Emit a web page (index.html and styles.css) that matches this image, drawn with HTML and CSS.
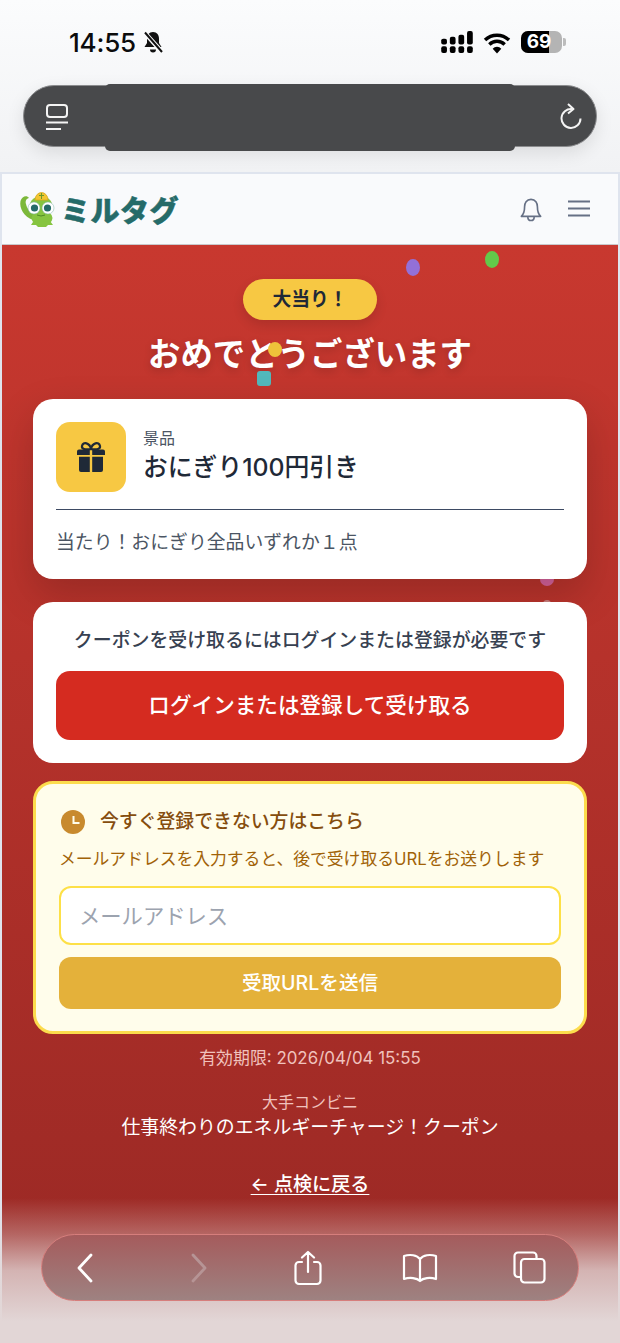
FILE: index.html
```html
<!DOCTYPE html>
<html lang="ja">
<head>
<meta charset="utf-8">
<title>ミルタグ</title>
<link rel="stylesheet" href="styles.css">
</head>
<body>
<div class="phone">
  <div class="chrome-top">
    <div class="status">
      <div class="status-left">
        <span class="clock">14:55</span>
        <svg class="mute" viewBox="0 0 22 24" width="22" height="24"><path d="M11 2c-4 0-6 3-6 7v4l-2.500 4h17L17 13V9c0-4-2-7-6-7z" fill="#111"/><path d="M8 19.500a3 3 0 0 0 6 0z" fill="#111"/><path d="M2 2l18 20" stroke="#fbfcfd" stroke-width="4.500"/><path d="M3 2.500l17 19.500" stroke="#111" stroke-width="2"/></svg>
      </div>
      <div class="status-right">
        <svg width="32" height="22" viewBox="0 0 33 23"><g fill="#000"><rect x="0" y="8" width="6" height="6" rx="2"/><rect x="0" y="16" width="6" height="7" rx="2"/><rect x="9" y="6" width="6" height="8" rx="2"/><rect x="9" y="16" width="6" height="7" rx="2"/><rect x="18" y="4" width="6" height="10" rx="2"/><rect x="18" y="16" width="6" height="7" rx="2"/><rect x="27" y="0" width="6" height="14" rx="2"/><rect x="27" y="16" width="6" height="7" rx="2"/></g></svg>
        <svg width="28" height="23" viewBox="0 0 29 24"><g fill="none" stroke="#000" stroke-width="3.600"><path d="M2 9.500a18 18 0 0 1 25 0"/><path d="M6.500 14a11.500 11.500 0 0 1 16 0"/></g><path d="M10 18.500a6 6 0 0 1 9 0l-4.500 5z" fill="#000"/></svg>
        <div class="battery"><div class="battery-level"></div><span class="battery-num">69</span><span class="battery-cap"></span></div>
      </div>
    </div>
    <div class="urlbar">
      <svg class="url-tabs" width="24" height="26" viewBox="0 0 24 26" fill="none" stroke="#f4f4f4" stroke-width="2"><rect x="2" y="1" width="20" height="12" rx="3"/><path d="M1 18.500h22M1 25h15"/></svg>
      <svg class="url-reload" width="23" height="26" viewBox="0 0 23 26" fill="none" stroke="#f4f4f4" stroke-width="2"><path d="M13 6a9.500 9.500 0 1 0 8.500 9.500"/><path d="M9 1l5.500 5-5.500 4.500" stroke-linejoin="round"/></svg>
      <div class="redaction"></div>
    </div>
  </div>

  <div class="site">
    <header class="site-header">
      <div class="logo">
        <svg width="38" height="38" viewBox="0 0 38 38"><path d="M14 30C5 27 0 18 1.500 11 3 6 8 5 10 8 7.500 8.500 6 11 7 14c1 5 4 8 9 9z" fill="#7cb83a"/><ellipse cx="22" cy="15" rx="11" ry="9" fill="#86c440"/><ellipse cx="23" cy="28" rx="10.500" ry="7.500" fill="#86c440"/><path d="M14 32l-2 3h5l2 2h8l2-2h5l-3-4z" fill="#86c440"/><path d="M16 10a6.500 7.500 0 0 1 13 0z" fill="#f2c531" stroke="#d8a81c" stroke-width=".8"/><path d="M22.500 3v6M20 5.500h5" stroke="#6b9a2a" stroke-width="1"/><circle cx="15" cy="18" r="6" fill="#fff" stroke="#7db2a8" stroke-width=".5"/><circle cx="29" cy="18" r="6" fill="#fff" stroke="#7db2a8" stroke-width=".5"/><circle cx="15.500" cy="18" r="3.600" fill="#256b69"/><circle cx="28.500" cy="18" r="3.600" fill="#256b69"/><path d="M18 25q4 2 8 0" stroke="#4f8a25" fill="none"/></svg>
        <span class="logo-text">ミルタグ</span>
      </div>
      <div class="header-icons">
        <svg width="22" height="27" viewBox="0 0 24 28" fill="none" stroke="#667085" stroke-width="1.800"><path d="M12 3c-5 0-7 4-7 8 0 5-1 8-3.500 10.500h21C20 19 19 16 19 11c0-4-2-8-7-8z" stroke-linejoin="round"/><path d="M8.500 21.500c0 6 7 6 7 0"/></svg>
        <svg width="24" height="20" viewBox="0 0 24 20" fill="none" stroke="#667085" stroke-width="1.800"><path d="M1 2.500h22M1 9.500h22M1 16.500h22"/></svg>
      </div>
    </header>

    <main class="prize">
      <i class="confetti c-purple"></i>
      <i class="confetti c-green"></i>
      <i class="confetti c-pink"></i>
      <i class="confetti c-faint"></i>
      <span class="badge">大当り！</span>
      <h1 class="title">おめでとうございます</h1>
      <i class="confetti c-yellow"></i>
      <i class="confetti c-teal"></i>

      <section class="card prize-card">
        <div class="prize-row">
          <div class="gift">
            <svg width="32" height="32" viewBox="0 0 32 32" fill="#1f2937"><path d="M16 8c-1-6-8-8-9-3-.6 3 3 4 9 3zm0 0c1-6 8-8 9-3 .6 3-3 4-9 3z" fill="none" stroke="#1f2937" stroke-width="2.200"/><path d="M2 10.500a2 2 0 0 1 2-2h10.800V14H2zM17.200 8.500H28a2 2 0 0 1 2 2V14H17.200zM4 15.800h10.800V31H6a2 2 0 0 1-2-2zM17.200 15.800H28V29a2 2 0 0 1-2 2h-8.800z"/></svg>
          </div>
          <div class="prize-text">
            <div class="prize-label">景品</div>
            <div class="prize-name">おにぎり100円引き</div>
          </div>
        </div>
        <p class="prize-desc">当たり！おにぎり全品いずれか１点</p>
      </section>

      <section class="card login-card">
        <p class="login-text">クーポンを受け取るにはログインまたは登録が必要です</p>
        <a class="btn-login">ログインまたは登録して受け取る</a>
      </section>

      <section class="later-card">
        <div class="later-head">
          <svg width="24" height="24" viewBox="0 0 24 24"><circle cx="12" cy="12" r="12" fill="#c88a2e"/><path d="M12.500 6v7h6" fill="none" stroke="#fffdeb" stroke-width="2"/></svg>
          <span>今すぐ登録できない方はこちら</span>
        </div>
        <p class="later-sub">メールアドレスを入力すると、後で受け取るURLをお送りします</p>
        <input class="email" type="text" placeholder="メールアドレス">
        <a class="btn-send">受取URLを送信</a>
      </section>

      <p class="expiry">有効期限: 2026/04/04 15:55</p>
      <p class="brand">大手コンビニ</p>
      <p class="campaign">仕事終わりのエネルギーチャージ！クーポン</p>
      <a class="back">← 点検に戻る</a>
    </main>
  </div>

  <div class="fade"></div>
  <nav class="toolbar">
    <svg width="20" height="32" viewBox="0 0 20 32" fill="none" stroke="#fff" stroke-width="2.800" stroke-linecap="round" stroke-linejoin="round"><path d="M16 3L4 16l12 13"/></svg>
    <svg class="tb-forward" width="20" height="32" viewBox="0 0 20 32" fill="none" stroke="#b69495" stroke-width="2.800" stroke-linecap="round" stroke-linejoin="round"><path d="M4 3l12 13L4 29"/></svg>
    <svg class="tb-share" width="28" height="36" viewBox="0 0 28 36" fill="none" stroke="#fff" stroke-width="2.200" stroke-linecap="round" stroke-linejoin="round"><path d="M8 12H5a3.500 3.500 0 0 0-3.500 3.500v15A3.500 3.500 0 0 0 5 34h18a3.500 3.500 0 0 0 3.500-3.500v-15A3.500 3.500 0 0 0 23 12h-3M14 22V2M8 7.500L14 2l6 5.500"/></svg>
    <svg class="tb-book" width="36" height="30" viewBox="0 0 36 30" fill="none" stroke="#fff" stroke-width="2.200" stroke-linejoin="round"><path d="M18 6C15 2 8 1 2 3v23c6-2 13-1 16 2 3-3 10-4 16-2V3c-6-2-13-1-16 3zM18 6v22"/></svg>
    <svg class="tb-tabs" width="33" height="33" viewBox="0 0 33 33" fill="none" stroke="#fff" stroke-width="2.200"><path d="M8 26H5a3.500 3.500 0 0 1-3.500-3.500V5A3.500 3.500 0 0 1 5 1.500h15A3.500 3.500 0 0 1 23.500 5v3"/><rect x="8" y="8" width="23.500" height="23.500" rx="3.500"/></svg>
  </nav>
</div>
</body>
</html>
```

FILE: styles.css
```css
* { box-sizing: border-box; }
html, body { margin: 0; padding: 0; }
body {
  font-family: Inter, "Noto Sans CJK JP", sans-serif;
  background: #fff;
}
p, h1 { margin: 0; }
.phone {
  position: relative;
  width: 620px;
  height: 1343px;
  overflow: hidden;
  display: flex;
  flex-direction: column;
}
.chrome-top {
  height: 172px;
  background: linear-gradient(#fbfcfd, #f1f2f4);
  padding: 26px 23px 0 23px;
  flex: none;
}
.status {
  display: flex;
  justify-content: space-between;
  align-items: center;
  height: 32px;
  padding: 0 31px 0 46px;
}
.status-left { display: flex; align-items: center; gap: 6px; }
.clock { font-size: 26px; font-weight: 500; color: #0c0c0c; letter-spacing: -.2px; }
.status-right { display: flex; align-items: center; gap: 10px; }
.battery {
  position: relative;
  width: 41px;
  height: 22px;
  border-radius: 7px;
  background: #b4b4b4;
  margin-right: 4px;
}
.battery-level { width: 28px; height: 22px; background: #000; border-radius: 7px 0 0 7px; }
.battery-num {
  position: absolute;
  left: 0; top: 0; width: 36px;
  text-align: center;
  font-size: 19px;
  line-height: 22px;
  font-weight: 700;
  color: #fff;
}
.battery-cap {
  position: absolute;
  right: -4px; top: 7px;
  width: 3px; height: 8px;
  background: #bcbcbc;
  border-radius: 0 2px 2px 0;
}
.urlbar {
  position: relative;
  margin-top: 27px;
  height: 62px;
  border-radius: 31px;
  background: #48494b;
  box-shadow: 0 6px 18px rgba(0, 0, 0, .1);
  border: 1px solid #8b8c8e;
  display: flex;
  align-items: center;
  justify-content: space-between;
  padding: 0 14px 0 21px;
}
.url-tabs { margin-top: 2px; }
.url-reload { margin-top: -1px; }
.redaction {
  position: absolute;
  left: 81px; top: -2px;
  width: 410px; height: 67px;
  border-radius: 5px;
  background: #48494b;
}
.site {
  flex: 1;
  display: flex;
  flex-direction: column;
  border: 2px solid #dfe4ee;
  border-bottom: 0;
}
.site-header {
  height: 71px;
  background: #f9fafc;
  display: flex;
  align-items: center;
  justify-content: space-between;
  padding: 0 27px 0 17px;
  border-bottom: 1px solid #c9c9cc;
  flex: none;
}
.logo { display: flex; align-items: center; gap: 4px; }
.logo-text {
  font-family: "Noto Sans CJK JP", sans-serif;
  font-weight: 900;
  font-size: 29px;
  line-height: 38px;
  color: #256b69;
  letter-spacing: .5px;
  -webkit-text-stroke: .5px #256b69;
}
.header-icons { display: flex; align-items: center; gap: 25px; }
.prize {
  position: relative;
  flex: 1;
  background: linear-gradient(180deg, #c8382f 0%, #982824 100%);
  padding: 34px 31px 0;
  display: flex;
  flex-direction: column;
  align-items: center;
}
.confetti { position: absolute; display: block; width: 14px; height: 17px; border-radius: 50%; }
.c-purple { left: 404px; top: 14px; background: #9370d8; }
.c-green { left: 483px; top: 6px; background: #62c94a; }
.c-yellow { left: 266px; top: 97px; width: 14px; height: 15px; background: #eec23a; }
.c-teal { left: 255px; top: 126px; height: 15px; border-radius: 3px; background: #52b8bb; }
.c-pink { left: 538px; top: 328px; height: 13px; background: #d4619a; }
.c-faint { left: 541px; top: 355px; width: 8px; height: 8px; background: #c9807f; }
.badge {
  width: 134px;
  height: 41px;
  border-radius: 21px;
  background: #f7c843;
  color: #1f2937;
  font-weight: 700;
  font-size: 18.800px;
  padding-top: 1px;
  line-height: 40px;
  text-align: center;
  box-shadow: 0 5px 12px rgba(0, 0, 0, .12);
  flex: none;
}
.title {
  margin-top: 13px;
  font-size: 32.400px;
  line-height: 44px;
  font-weight: 700;
  color: #fff;
  text-shadow: 0 3px 8px rgba(0, 0, 0, .18);
}
.card {
  position: relative;
  z-index: 1;
  width: 100%;
  background: #fff;
  border-radius: 20px;
  padding: 23px;
  flex: none;
}
.prize-card {
  margin-top: 22px;
  height: 180px;
  box-shadow: 0 16px 40px rgba(0, 0, 0, .18);
}
.prize-row {
  display: flex;
  gap: 17px;
  align-items: center;
  padding-bottom: 17px;
  border-bottom: 1px solid #3d4a63;
}
.gift {
  width: 70px;
  height: 70px;
  border-radius: 14px;
  background: #f7c843;
  display: flex;
  align-items: center;
  justify-content: center;
}
.prize-text { margin-top: -2px; }
.prize-label { font-size: 16px; line-height: 20px; color: #4b5563; }
.prize-name { margin-top: 2px; font-size: 24.800px; line-height: 34px; font-weight: 500; color: #1f2937; }
.prize-desc { margin-top: 19px; font-size: 18.850px; line-height: 28px; color: #4b5563; }
.login-card { margin-top: 23px; height: 161px; padding-top: 24px; }
.login-text { text-align: center; font-size: 18.900px; line-height: 30px; font-weight: 500; color: #374151; }
.btn-login {
  display: block;
  margin-top: 15px;
  height: 69px;
  border-radius: 14px;
  background: #d52b20;
  color: #fff;
  text-align: center;
  font-size: 21.600px;
  font-weight: 500;
  line-height: 69px;
}
.later-card {
  position: relative;
  z-index: 1;
  margin-top: 18px;
  width: 100%;
  height: 253px;
  flex: none;
  background: #fffdeb;
  border: 3px solid #fcdc4d;
  border-radius: 20px;
  padding: 22px 23px 0;
}
.later-head {
  display: flex;
  align-items: center;
  gap: 15px;
  padding-left: 2px;
  font-size: 18.850px;
  font-weight: 500;
  line-height: 32px;
  color: #854d0e;
}
.later-sub { margin-top: 8px; font-size: 16.800px; line-height: 26px; color: #a16207; }
.email {
  display: block;
  margin-top: 14px;
  width: 100%;
  height: 59px;
  border: 2px solid #fde047;
  border-radius: 12px;
  background: #fff;
  padding: 0 18px;
  font-family: inherit;
  font-size: 21.300px;
  outline: none;
}
.email::placeholder { color: #9ca3af; opacity: 1; }
.btn-send {
  display: block;
  margin-top: 12px;
  height: 52px;
  border-radius: 12px;
  background: #e4b13a;
  color: #fff;
  text-align: center;
  font-size: 19.600px;
  font-weight: 500;
  line-height: 52px;
}
.expiry { margin-top: 12px; font-size: 16.900px; line-height: 24px; color: #f0c2bd; }
.brand { margin-top: 20px; font-size: 16px; line-height: 24px; color: #f0c2bd; }
.campaign { margin-top: 1px; font-size: 18.900px; line-height: 26px; font-weight: 400; color: #fff; }
.back {
  margin-top: 30px;
  font-size: 19.100px;
  line-height: 26px;
  font-weight: 500;
  color: #fff;
  text-decoration: underline;
  text-underline-offset: 3px;
}
.fade {
  position: absolute;
  left: 0; right: 0; bottom: 0;
  height: 145px;
  background: linear-gradient(rgba(226, 214, 214, 0) 0%, rgba(226, 214, 214, .35) 25%, rgba(226, 214, 214, .8) 50%, #e2d6d6 85%);
}
.toolbar {
  position: absolute;
  left: 41px; top: 1234px;
  width: 538px; height: 67px;
  border-radius: 34px;
  border: 1.500px solid #d67e7c;
  background: linear-gradient(#a55b5c, #9e8281);
  display: flex;
  align-items: center;
  padding: 0 0 0 32.500px;
}
.tb-forward { margin-left: 94px; }
.tb-share { margin-left: 85px; }
.tb-book { margin-left: 80px; }
.tb-tabs { margin-left: 75.500px; }
```
